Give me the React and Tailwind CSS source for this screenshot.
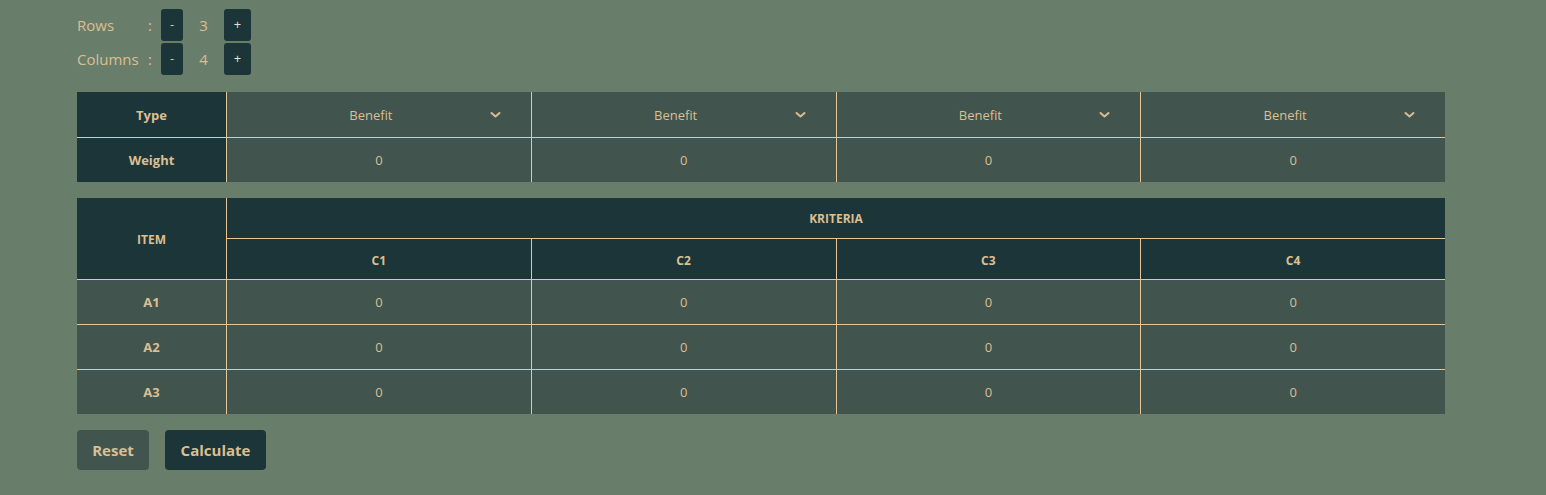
import React from "react";

const font = { fontFamily: '"Open Sans", "Noto Sans", sans-serif' };

function Chevron() {
  return (
    <svg width="11" height="7" viewBox="0 0 11 7" className="absolute right-[30px] top-1/2 -translate-y-1/2">
      <path d="M1.5 1.5 L5.5 5 L9.5 1.5" fill="none" stroke="#d9bd91" strokeWidth="2" strokeLinecap="round" strokeLinejoin="round" />
    </svg>
  );
}

function Counter({ label, value }) {
  return (
    <div className="flex items-center h-[32px] text-[15px] text-[#dcbf91]">
      <span className="w-[71px]">{label}</span>
      <span className="w-[13px]">:</span>
      <button className="w-[22px] h-[32px] rounded-[3px] bg-[#1c3538] text-[#dcbf91] text-[13px] flex items-center justify-center">-</button>
      <span className="w-[41px] text-center">{value}</span>
      <button className="w-[27px] h-[32px] rounded-[3px] bg-[#1c3538] text-[#e8e2d0] text-[13px] flex items-center justify-center">+</button>
    </div>
  );
}

export default function App() {
  const cols = ["C1", "C2", "C3", "C4"];
  const rows = ["A1", "A2", "A3"];
  return (
    <div className="min-h-[495px] w-full bg-[#687e6a]" style={font}>
      <div className="pl-[77px] pt-[9px]">
        <div className="flex flex-col gap-[2px]">
          <Counter label="Rows" value="3" />
          <Counter label="Columns" value="4" />
        </div>

        <div className="mt-[17px] w-[1368px] grid grid-cols-[149px_1fr_1fr_1fr_1fr] gap-px bg-[#e6c697] text-[13px] text-[#dcbf91]">
          <div className="h-[45px] pt-[2px] bg-[#1c3538] flex items-center justify-center font-bold">Type</div>
          {cols.map((c) => (
            <div key={c} className="relative h-[45px] pt-[2px] pr-[16px] bg-[#41544e] flex items-center justify-center">
              <span>Benefit</span>
              <Chevron />
            </div>
          ))}
          <div className="h-[44px] pt-[2px] bg-[#1c3538] flex items-center justify-center font-bold">Weight</div>
          {cols.map((c) => (
            <div key={c} className="h-[44px] pt-[2px] bg-[#41544e] flex items-center justify-center">0</div>
          ))}
        </div>

        <div className="mt-[16px] w-[1368px] grid grid-cols-[149px_1fr_1fr_1fr_1fr] gap-px bg-[#e6c697] text-[13px] text-[#dcbf91]">
          <div className="row-span-2 pt-[2px] bg-[#1c3538] flex items-center justify-center font-bold text-[12px]">ITEM</div>
          <div className="col-span-4 h-[40px] pt-[2px] bg-[#1c3538] flex items-center justify-center font-bold text-[12px]">KRITERIA</div>
          {cols.map((c) => (
            <div key={c} className="h-[40px] pt-[3px] bg-[#1c3538] flex items-center justify-center font-bold text-[12px]">{c}</div>
          ))}
          {rows.map((r) => (
            <React.Fragment key={r}>
              <div className="h-[44px] pt-[2px] bg-[#41544e] flex items-center justify-center font-bold">{r}</div>
              {cols.map((c) => (
                <div key={c} className="h-[44px] pt-[2px] bg-[#41544e] flex items-center justify-center">0</div>
              ))}
            </React.Fragment>
          ))}
        </div>

        <div className="mt-[16px] flex gap-[16px]">
          <button className="w-[72px] h-[40px] rounded-[4px] bg-[#41544e] text-[#dcbf91] text-[15px] font-bold">Reset</button>
          <button className="w-[101px] h-[40px] rounded-[4px] bg-[#1c3538] text-[#dcbf91] text-[15px] font-bold">Calculate</button>
        </div>
      </div>
    </div>
  );
}
